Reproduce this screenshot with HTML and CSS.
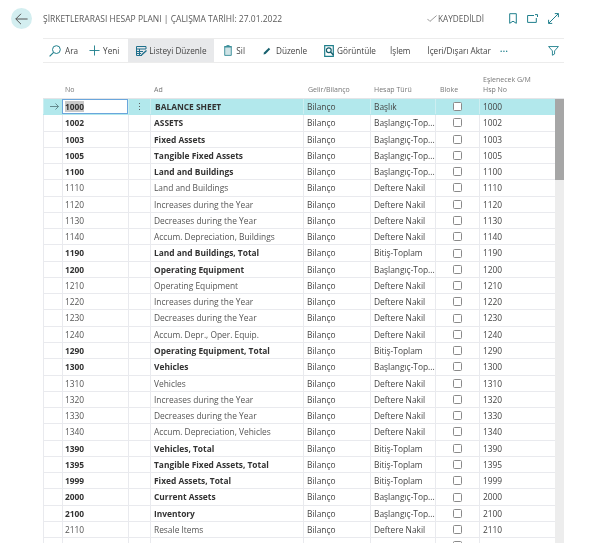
FILE: index.html
```html
<!DOCTYPE html>
<html lang="tr">
<head>
<meta charset="utf-8">
<title>Şirketlerarası Hesap Planı</title>
<link rel="stylesheet" href="styles.css">
</head>
<body>
<div class="page">
  <header class="titlebar">
    <button class="back" aria-label="Geri">
      <svg width="13" height="12" viewBox="0 0 13 12"><path d="M6 .8 .8 6 6 11.2M.8 6H12.6" fill="none" stroke="#555" stroke-width="1"/></svg>
    </button>
    <h1 class="title">ŞİRKETLERARASI HESAP PLANI | ÇALIŞMA TARİHİ: 27.01.2022</h1>
    <div class="saved">
      <svg width="10" height="7" viewBox="0 0 12 8"><path d="M.5 4.500 3.500 7.500 11.500.5" fill="none" stroke="#777" stroke-width=".9"/></svg>
      <span>KAYDEDİLDİ</span>
    </div>
    <div class="title-icons">
      <svg width="8" height="11" viewBox="0 0 8 11"><path d="M.7.7H7.300V10.300L4 8.200.7 10.300Z" fill="none" stroke="#1f7f8c" stroke-width="1"/></svg>
      <svg width="11" height="9" viewBox="0 0 11 9"><path d="M7 1.500H.6V8.400H9.300V4M8 .6 10.500 .6 10.500 3" fill="none" stroke="#1f7f8c" stroke-width="1"/></svg>
      <svg width="11" height="11" viewBox="0 0 11 11"><path d="M.6 10.400 10.400.6M6.800.6H10.400V4.200M.6 6.800V10.400H4.200" fill="none" stroke="#1f7f8c" stroke-width="1"/></svg>
    </div>
  </header>

  <nav class="toolbar">
    <a class="tool tool-search"><svg width="12" height="12" viewBox="0 0 12 12"><circle cx="7.400" cy="4.600" r="3.900" fill="none" stroke="#1f7f8c"/><path d="M4.600 7.400.6 11.400" stroke="#1f7f8c" stroke-width="1.100"/></svg>Ara</a>
    <a class="tool tool-new"><svg width="11" height="11" viewBox="0 0 12 12"><path d="M6 .5V11.500M.5 6H11.500" stroke="#1f7f8c"/></svg>Yeni</a>
    <a class="tool tool-edit-list"><svg width="11" height="10" viewBox="0 0 11 10"><path d="M.5.5H10V3H.5ZM.5 3V9.500H6M3.500 3V9M.5 5.500H7M.5 7.500H5" fill="none" stroke="#1f6f8c"/><path d="M5.500 9 10.500 4.500" stroke="#1f6f8c" stroke-width="1.400"/></svg>Listeyi Düzenle</a>
    <a class="tool tool-delete"><svg width="8" height="11" viewBox="0 0 8 11"><path d="M.7 2H7.300V10.400H.7Z" fill="#cfe3e6" stroke="#1f7f8c" stroke-width=".8"/><path d="M.2 1.500H7.800M2.500.5H5.500" stroke="#1f7f8c" stroke-width=".8"/></svg>Sil</a>
    <a class="tool tool-editc"><svg width="8" height="8" viewBox="0 0 8 8"><path d="M.5 7.500 1 5.500 5.800.8 7.200 2.200 2.500 7Z" fill="#17606e"/></svg>Düzenle</a>
    <a class="tool tool-view"><svg width="11" height="12" viewBox="0 0 11 12"><path d="M.7.7H9.300V11.300H.7Z" fill="none" stroke="#1f7f8c" stroke-width="1.200"/><circle cx="4.800" cy="5.200" r="2.400" fill="none" stroke="#17606e" stroke-width="1.200"/><path d="M6.500 7 9.500 10" stroke="#17606e" stroke-width="1.400"/></svg>Görüntüle</a>
    <a class="tool tool-action">İşlem</a>
    <a class="tool tool-io">İçeri/Dışarı Aktar</a>
    <span class="more">···</span>
    <svg class="filter" width="11" height="10" viewBox="0 0 12 11"><path d="M.6.6H11.400L7.200 5.400V8.800L4.800 10.200V5.400Z" fill="none" stroke="#1f7f8c"/></svg>
  </nav>

  <section class="list">
    <div class="head">
      <span></span><span class="hc">No</span><span></span><span class="hc hc-ad">Ad</span><span class="hc hc-g">Gelir/Bilanço</span><span class="hc hc-h">Hesap Türü</span><span class="hc hc-b">Bloke</span><span class="hc hc-e">Eşlenecek G/M<br>Hsp No</span>
    </div>
    <div class="body">
      <div class="rows">
        <div class="row bold active"><span class="c c-arrow"><svg width="9" height="7" viewBox="0 0 9 7"><path d="M5.500.5 8.500 3.500 5.500 6.500M0 3.500H8.500" fill="none" stroke="#5b7f84" stroke-width=".9"/></svg></span><span class="c c-no"><span class="sel">1000</span></span><span class="c c-menu">⋮</span><span class="c c-ad">BALANCE SHEET</span><span class="c n">Bilanço</span><span class="c n">Başlık</span><span class="c c-chk"><i></i></span><span class="c n">1000</span></div>
        <div class="row bold"><span class="c"></span><span class="c c-no">1002</span><span class="c"></span><span class="c c-ad">ASSETS</span><span class="c n">Bilanço</span><span class="c n">Başlangıç-Top...</span><span class="c c-chk"><i></i></span><span class="c n">1002</span></div>
        <div class="row bold"><span class="c"></span><span class="c c-no">1003</span><span class="c"></span><span class="c c-ad">Fixed Assets</span><span class="c n">Bilanço</span><span class="c n">Başlangıç-Top...</span><span class="c c-chk"><i></i></span><span class="c n">1003</span></div>
        <div class="row bold"><span class="c"></span><span class="c c-no">1005</span><span class="c"></span><span class="c c-ad">Tangible Fixed Assets</span><span class="c n">Bilanço</span><span class="c n">Başlangıç-Top...</span><span class="c c-chk"><i></i></span><span class="c n">1005</span></div>
        <div class="row bold"><span class="c"></span><span class="c c-no">1100</span><span class="c"></span><span class="c c-ad">Land and Buildings</span><span class="c n">Bilanço</span><span class="c n">Başlangıç-Top...</span><span class="c c-chk"><i></i></span><span class="c n">1100</span></div>
        <div class="row"><span class="c"></span><span class="c c-no">1110</span><span class="c"></span><span class="c c-ad">Land and Buildings</span><span class="c n">Bilanço</span><span class="c n">Deftere Nakil</span><span class="c c-chk"><i></i></span><span class="c n">1110</span></div>
        <div class="row"><span class="c"></span><span class="c c-no">1120</span><span class="c"></span><span class="c c-ad">Increases during the Year</span><span class="c n">Bilanço</span><span class="c n">Deftere Nakil</span><span class="c c-chk"><i></i></span><span class="c n">1120</span></div>
        <div class="row"><span class="c"></span><span class="c c-no">1130</span><span class="c"></span><span class="c c-ad">Decreases during the Year</span><span class="c n">Bilanço</span><span class="c n">Deftere Nakil</span><span class="c c-chk"><i></i></span><span class="c n">1130</span></div>
        <div class="row"><span class="c"></span><span class="c c-no">1140</span><span class="c"></span><span class="c c-ad">Accum. Depreciation, Buildings</span><span class="c n">Bilanço</span><span class="c n">Deftere Nakil</span><span class="c c-chk"><i></i></span><span class="c n">1140</span></div>
        <div class="row bold"><span class="c"></span><span class="c c-no">1190</span><span class="c"></span><span class="c c-ad">Land and Buildings, Total</span><span class="c n">Bilanço</span><span class="c n">Bitiş-Toplam</span><span class="c c-chk"><i></i></span><span class="c n">1190</span></div>
        <div class="row bold"><span class="c"></span><span class="c c-no">1200</span><span class="c"></span><span class="c c-ad">Operating Equipment</span><span class="c n">Bilanço</span><span class="c n">Başlangıç-Top...</span><span class="c c-chk"><i></i></span><span class="c n">1200</span></div>
        <div class="row"><span class="c"></span><span class="c c-no">1210</span><span class="c"></span><span class="c c-ad">Operating Equipment</span><span class="c n">Bilanço</span><span class="c n">Deftere Nakil</span><span class="c c-chk"><i></i></span><span class="c n">1210</span></div>
        <div class="row"><span class="c"></span><span class="c c-no">1220</span><span class="c"></span><span class="c c-ad">Increases during the Year</span><span class="c n">Bilanço</span><span class="c n">Deftere Nakil</span><span class="c c-chk"><i></i></span><span class="c n">1220</span></div>
        <div class="row"><span class="c"></span><span class="c c-no">1230</span><span class="c"></span><span class="c c-ad">Decreases during the Year</span><span class="c n">Bilanço</span><span class="c n">Deftere Nakil</span><span class="c c-chk"><i></i></span><span class="c n">1230</span></div>
        <div class="row"><span class="c"></span><span class="c c-no">1240</span><span class="c"></span><span class="c c-ad">Accum. Depr., Oper. Equip.</span><span class="c n">Bilanço</span><span class="c n">Deftere Nakil</span><span class="c c-chk"><i></i></span><span class="c n">1240</span></div>
        <div class="row bold"><span class="c"></span><span class="c c-no">1290</span><span class="c"></span><span class="c c-ad">Operating Equipment, Total</span><span class="c n">Bilanço</span><span class="c n">Bitiş-Toplam</span><span class="c c-chk"><i></i></span><span class="c n">1290</span></div>
        <div class="row bold"><span class="c"></span><span class="c c-no">1300</span><span class="c"></span><span class="c c-ad">Vehicles</span><span class="c n">Bilanço</span><span class="c n">Başlangıç-Top...</span><span class="c c-chk"><i></i></span><span class="c n">1300</span></div>
        <div class="row"><span class="c"></span><span class="c c-no">1310</span><span class="c"></span><span class="c c-ad">Vehicles</span><span class="c n">Bilanço</span><span class="c n">Deftere Nakil</span><span class="c c-chk"><i></i></span><span class="c n">1310</span></div>
        <div class="row"><span class="c"></span><span class="c c-no">1320</span><span class="c"></span><span class="c c-ad">Increases during the Year</span><span class="c n">Bilanço</span><span class="c n">Deftere Nakil</span><span class="c c-chk"><i></i></span><span class="c n">1320</span></div>
        <div class="row"><span class="c"></span><span class="c c-no">1330</span><span class="c"></span><span class="c c-ad">Decreases during the Year</span><span class="c n">Bilanço</span><span class="c n">Deftere Nakil</span><span class="c c-chk"><i></i></span><span class="c n">1330</span></div>
        <div class="row"><span class="c"></span><span class="c c-no">1340</span><span class="c"></span><span class="c c-ad">Accum. Depreciation, Vehicles</span><span class="c n">Bilanço</span><span class="c n">Deftere Nakil</span><span class="c c-chk"><i></i></span><span class="c n">1340</span></div>
        <div class="row bold"><span class="c"></span><span class="c c-no">1390</span><span class="c"></span><span class="c c-ad">Vehicles, Total</span><span class="c n">Bilanço</span><span class="c n">Bitiş-Toplam</span><span class="c c-chk"><i></i></span><span class="c n">1390</span></div>
        <div class="row bold"><span class="c"></span><span class="c c-no">1395</span><span class="c"></span><span class="c c-ad">Tangible Fixed Assets, Total</span><span class="c n">Bilanço</span><span class="c n">Bitiş-Toplam</span><span class="c c-chk"><i></i></span><span class="c n">1395</span></div>
        <div class="row bold"><span class="c"></span><span class="c c-no">1999</span><span class="c"></span><span class="c c-ad">Fixed Assets, Total</span><span class="c n">Bilanço</span><span class="c n">Bitiş-Toplam</span><span class="c c-chk"><i></i></span><span class="c n">1999</span></div>
        <div class="row bold"><span class="c"></span><span class="c c-no">2000</span><span class="c"></span><span class="c c-ad">Current Assets</span><span class="c n">Bilanço</span><span class="c n">Başlangıç-Top...</span><span class="c c-chk"><i></i></span><span class="c n">2000</span></div>
        <div class="row bold"><span class="c"></span><span class="c c-no">2100</span><span class="c"></span><span class="c c-ad">Inventory</span><span class="c n">Bilanço</span><span class="c n">Başlangıç-Top...</span><span class="c c-chk"><i></i></span><span class="c n">2100</span></div>
        <div class="row"><span class="c"></span><span class="c c-no">2110</span><span class="c"></span><span class="c c-ad">Resale Items</span><span class="c n">Bilanço</span><span class="c n">Deftere Nakil</span><span class="c c-chk"><i></i></span><span class="c n">2110</span></div>
        <div class="row"><span class="c"></span><span class="c c-no"></span><span class="c"></span><span class="c c-ad"></span><span class="c n"></span><span class="c n"></span><span class="c c-chk"><i></i></span><span class="c n"></span></div>
      </div>
      <div class="scroll"><div class="thumb"></div></div>
    </div>
  </section>
</div>
</body>
</html>
```
FILE: styles.css
```css
* { box-sizing: border-box; }
html, body { margin: 0; padding: 0; background: #fff; }
body { font-family: "Open Sans", "Noto Sans", sans-serif; color: #333; width: 605px; height: 551px; overflow: hidden; }
.page { padding: 8px 0 0 11px; width: 605px; filter: blur(.3px); }

.titlebar { display: flex; align-items: center; height: 21px; margin-bottom: 9px; }
.back { width: 21px; height: 21px; border-radius: 50%; border: 0; padding: 0; background: #d3eef0; display: flex; align-items: center; justify-content: center; margin-right: 11px; }
.title { font-size: 8.5px; font-weight: 400; color: #5a5a5a; margin: 0; white-space: nowrap; width: 384px; }
.saved { display: flex; align-items: center; gap: 1px; font-size: 8.2px; color: #5a5a5a; width: 83px; }
.title-icons { display: flex; align-items: center; gap: 10px; margin-left: -1px; }

.toolbar { display: flex; align-items: center; height: 25px; margin-left: 32px; width: 521px; border-top: 1px solid #ececec; border-bottom: 1px solid #ececec; font-size: 8.2px; color: #444; position: relative; }
.tool { display: flex; align-items: center; gap: 4px; height: 100%; white-space: nowrap; }
.tool-search { margin-left: 6px; }
.tool-new { margin-left: 11px; gap: 3px; }
.tool-edit-list { margin-left: 9px; background: #e8e9eb; width: 86px; padding-left: 8px; gap: 2px; }
.tool-delete { margin-left: 10px; }
.tool-editc { margin-left: 18px; gap: 5px; }
.tool-view { margin-left: 17px; gap: 2px; }
.tool-action { margin-left: 14px; }
.tool-io { margin-left: 17px; }
.more { margin-left: 9px; color: #1f7f8c; font-weight: 700; letter-spacing: .5px; }
.filter { position: absolute; right: 5px; top: 7px; }

.list { margin-left: 32px; width: 521px; }
.head { display: grid; grid-template-columns: 19px 66px 22px 153px 67px 65px 44px 75px; height: 35px; font-size: 7px; color: #777; align-items: end; padding-bottom: 3px; }
.hc { padding-left: 3px; line-height: 10px; }
.hc-ad { padding-left: 4px; }
.hc-g { padding-left: 5px; }
.hc-h { padding-left: 4px; }
.hc-b { padding-left: 5px; }
.hc-e { padding-left: 4px; }

.body { display: flex; height: 445px; overflow: hidden; border-top: 1px solid #e4e5e8; }
.rows { width: 512px; flex: none; }
.row { display: grid; grid-template-columns: 19px 66px 22px 153px 67px 65px 44px 75px; height: 16.270px; border-bottom: 1px solid #e9eaee; font-size: 8.400px; line-height: 15px; color: #555; }
.row.bold .c-no, .row.bold .c-ad { font-weight: 700; color: #333; }
.c { border-left: 1px solid #e9eaee; padding-left: 2px; white-space: nowrap; overflow: hidden; }
.c.n { color: #444; padding-left: 3px; }
.c-ad { padding-left: 3px; }
.row.active { background: #b2e8ec; border-bottom-color: #b2e8ec; }
.row.active .c { border-left-color: #cdeef1; }
.c-arrow { display: flex; align-items: center; justify-content: center; }
.row.active .c-no { background: #fff; outline: 1px solid #6aa6dc; outline-offset: -1px; padding-left: 2px; }
.sel { background: #c9c9c9; }
.row.active .c-ad { padding-left: 4px; }
.c-menu { text-align: center; padding: 0; color: #555; font-size: 9px; }
.c-chk { display: flex; align-items: center; justify-content: center; padding: 0; }
.c-chk i { display: block; width: 9px; height: 9px; border: 1px solid #8a8a8a; border-radius: 1.500px; background: #fff; }

.scroll { width: 9px; background: #ededed; flex: none; height: 100%; }
.thumb { height: 81px; background: #a6a6a6; }
```
